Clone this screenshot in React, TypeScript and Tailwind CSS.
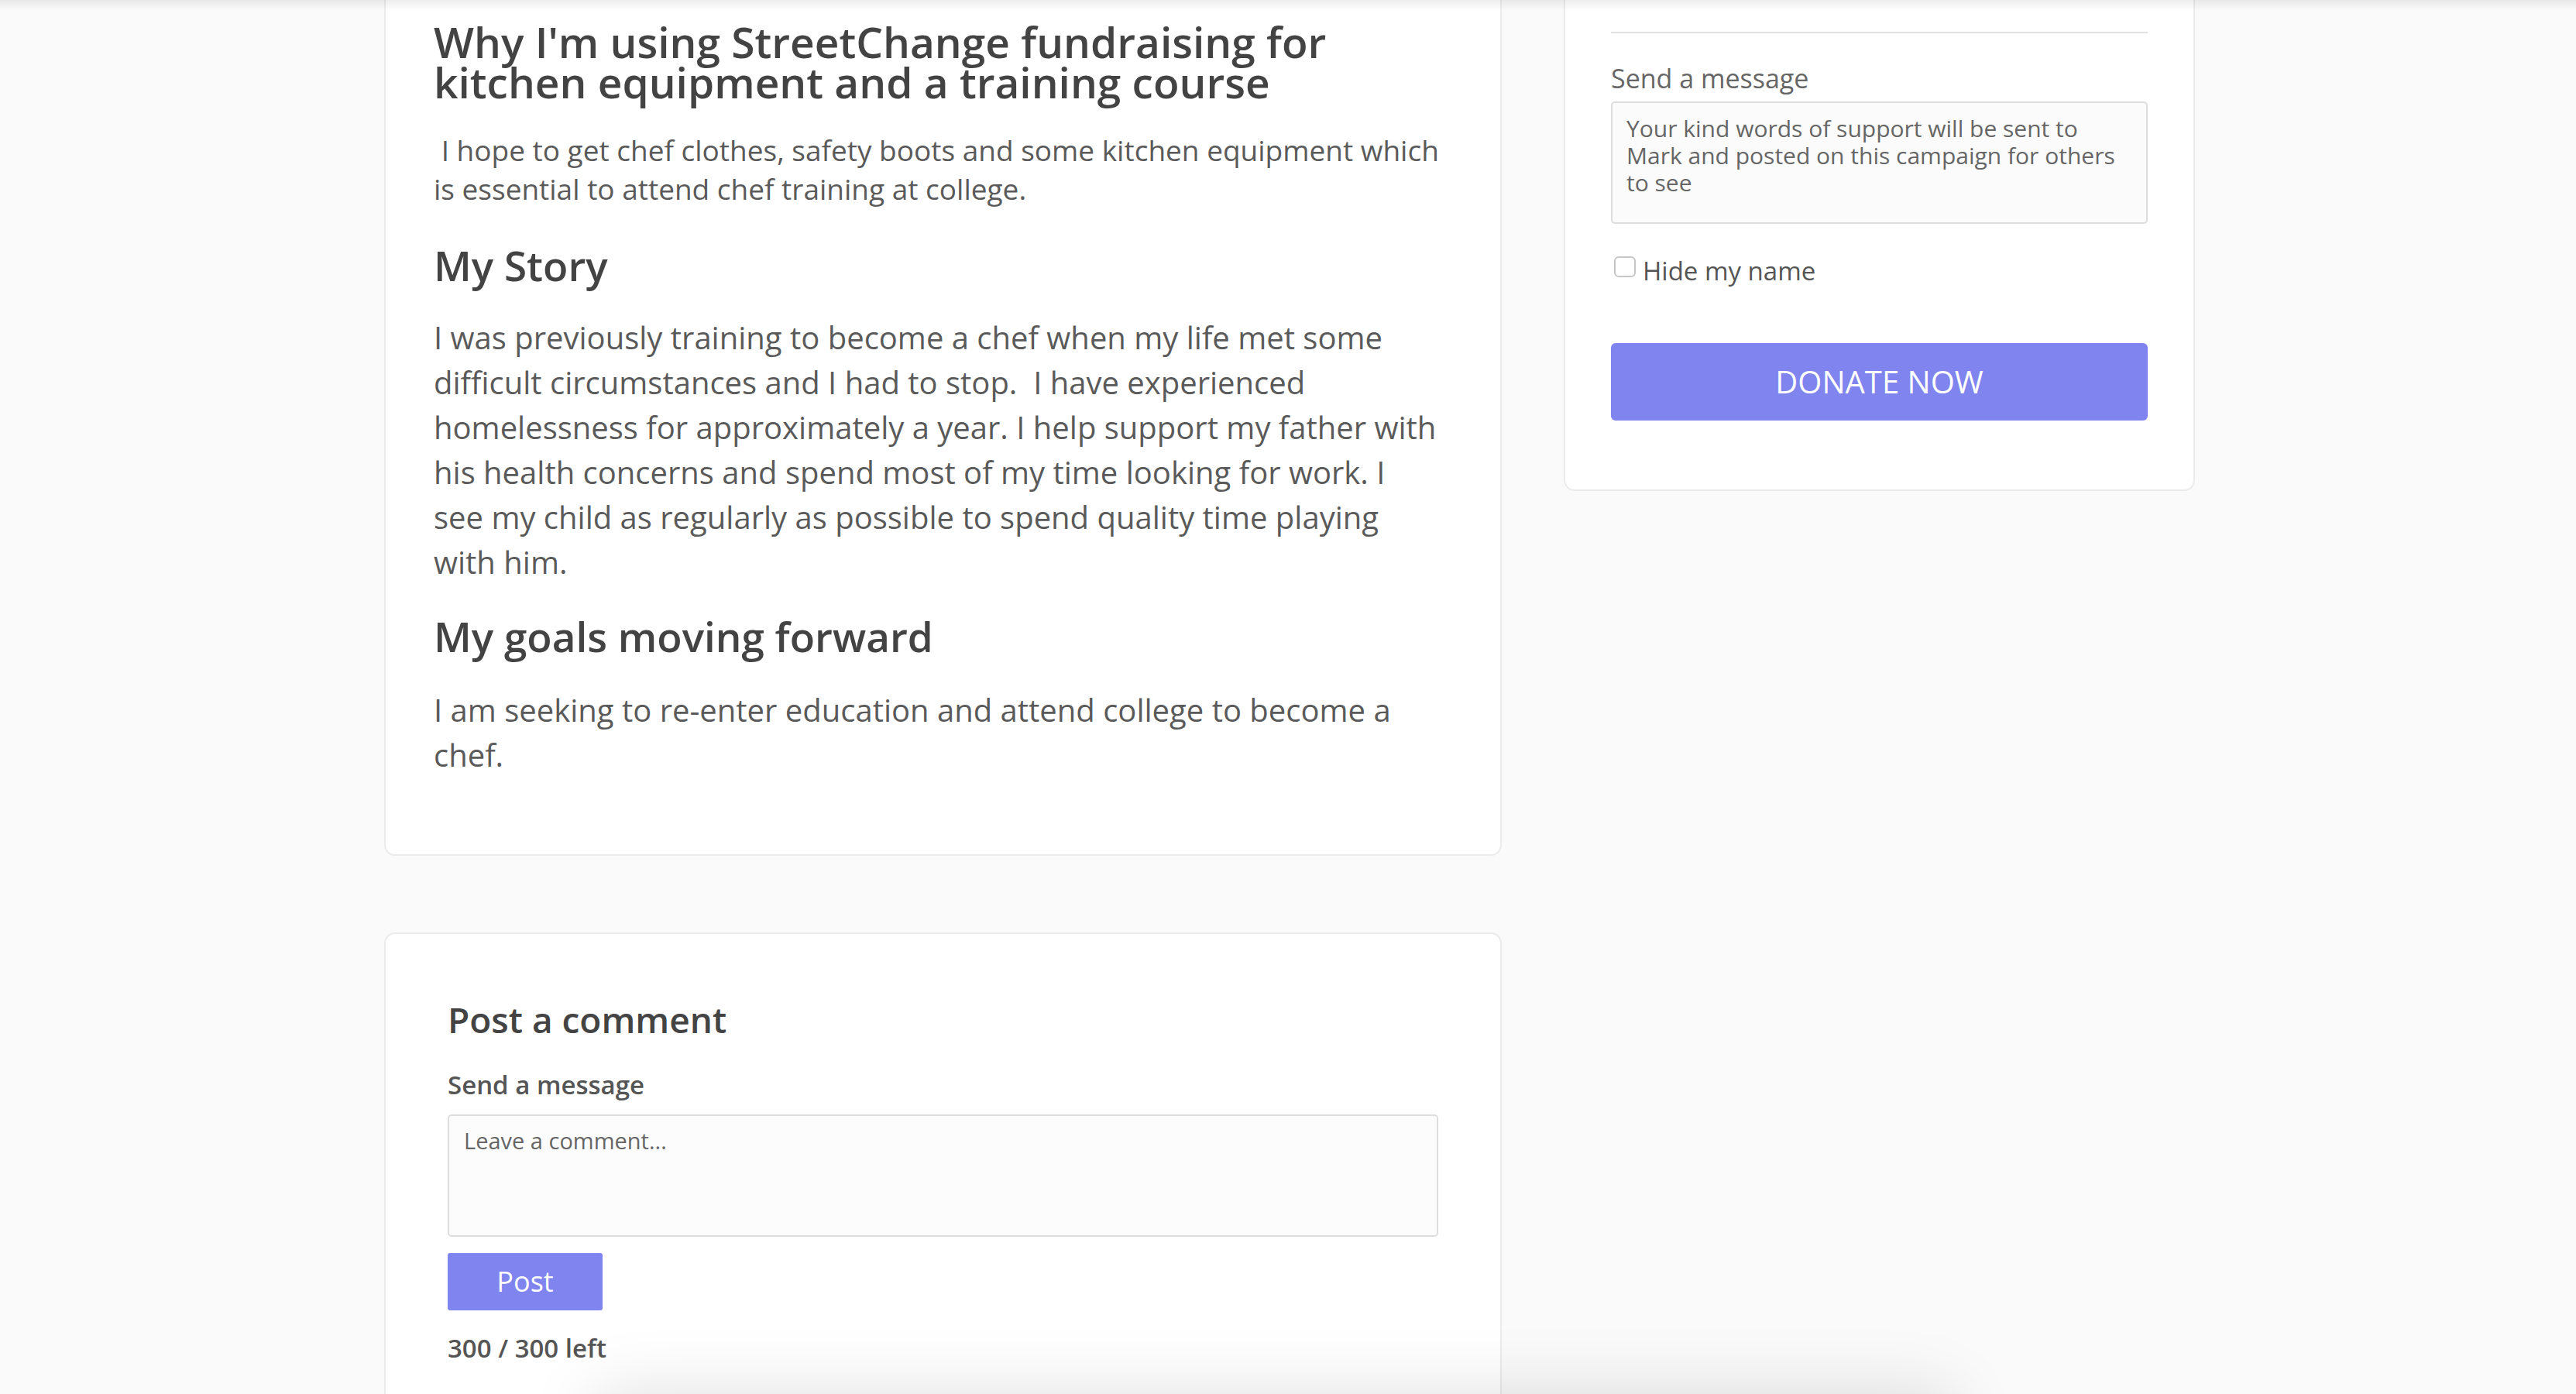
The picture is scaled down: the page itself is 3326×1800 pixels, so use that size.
import React from 'react'

const STORY_LINES = [
  'I was previously training to become a chef when my life met some',
  'difficult circumstances and I had to stop.\u00a0 I have experienced',
  'homelessness for approximately a year. I help support my father with',
  'his health concerns and spend most of my time looking for work. I',
  'see my child as regularly as possible to spend quality time playing',
  'with him.',
]

function StoryCard() {
  return (
    <div className="-mt-[40px] rounded-[14px] border-2 border-[#ebebeb] bg-white pl-[62px] pr-[62px] pt-[66px] pb-[99px]">
      <h1 className="mb-[37px] text-[55px] leading-[52px] font-semibold text-[#434343]">
        Why I'm using StreetChange fundraising for kitchen equipment and a training course
      </h1>
      <p className="mb-[44px] text-[37px] leading-[50px] text-[#5a5a5a]">
        {'\u00a0'}I hope to get chef clothes, safety boots and some kitchen equipment which is essential to attend chef
        training at college.
      </p>
      <h2 className="mb-[34px] text-[53px] leading-[60px] font-semibold text-[#434343]">My Story</h2>
      <p className="mb-[37px] text-[40px] leading-[58px] text-[#5a5a5a]">
        {STORY_LINES.map((line, i) => (
          <React.Fragment key={i}>
            {line}
            {i < STORY_LINES.length - 1 && <br />}
          </React.Fragment>
        ))}
      </p>
      <h2 className="mb-[36px] text-[53px] leading-[60px] font-semibold text-[#434343]">My goals moving forward</h2>
      <p className="text-[40px] leading-[58px] text-[#5a5a5a]">
        I am seeking to re-enter education and attend college to become a chef.
      </p>
    </div>
  )
}

function CommentCard() {
  return (
    <div className="mt-[99px] rounded-[14px] border-2 border-[#ebebeb] bg-white px-[80px] pt-[84px] pb-[80px]">
      <h3 className="mb-[38px] text-[46px] leading-[53px] font-semibold text-[#434343]">Post a comment</h3>
      <label className="mb-[18px] block text-[33px] leading-[40px] font-semibold text-[#555]">Send a message</label>
      <textarea
        className="block h-[158px] w-full resize-none rounded-[5px] border-2 border-[#dddddd] bg-[#fcfcfc] px-[19px] py-[14px] text-[29px] leading-[36px] text-[#555] outline-none placeholder:text-[#666]"
        placeholder="Leave a comment..."
      />
      <button className="mt-[21px] block h-[74px] w-[200px] rounded-[3px] bg-[#8084ee] text-[36px] text-white">
        Post
      </button>
      <p className="mt-[29px] text-[33px] leading-[40px] font-semibold text-[#555]">300 / 300 left</p>
    </div>
  )
}

function DonateCard() {
  return (
    <div className="-mt-[100px] w-[815px] shrink-0 rounded-[14px] border-2 border-[#ebebeb] bg-white px-[59px] pt-[139px] pb-[89px]">
      <div className="h-[2px] bg-[#e2e2e2]" />
      <label className="mt-[38px] block text-[34px] leading-[40px] text-[#666]">Send a message</label>
      <textarea
        className="mt-[10px] block h-[158px] w-full resize-none rounded-[5px] border-2 border-[#dddddd] bg-[#fbfbfb] px-[18px] pt-[15px] text-[30px] leading-[35px] text-[#555] outline-none placeholder:text-[#666]"
        placeholder="Your kind words of support will be sent to Mark and posted on this campaign for others to see"
      />
      <label className="mt-[41px] flex items-start gap-[9px] text-[33px] leading-[40px] text-[#555]">
        <input
          type="checkbox"
          className="ml-[4px] mt-[1px] h-[27px] w-[28px] shrink-0 appearance-none rounded-[6px] border-2 border-[#c6c6c6] bg-white"
        />
        Hide my name
      </label>
      <button className="mt-[73px] block h-[100px] w-full rounded-[6px] bg-[#8084ee] text-[40px] text-white">
        DONATE NOW
      </button>
    </div>
  )
}

export default function App() {
  return (
    <div className="relative h-[1800px] overflow-hidden bg-[#fafafa] font-['Open_Sans',sans-serif]">
      <div className="flex items-start gap-[80px] pl-[496px]">
        <div className="flex w-[1443px] shrink-0 flex-col">
          <StoryCard />
          <CommentCard />
        </div>
        <DonateCard />
      </div>

      {/* header shadow at the top edge */}
      <div className="pointer-events-none absolute inset-x-0 top-0 h-[14px] bg-linear-to-b from-black/[0.07] to-transparent" />
      {/* shadow of a bar sitting just under the fold */}
      <div className="pointer-events-none absolute left-[770px] top-[1800px] h-[200px] w-[1750px] shadow-[0_0_90px_rgba(0,0,0,0.13)]" />
    </div>
  )
}
